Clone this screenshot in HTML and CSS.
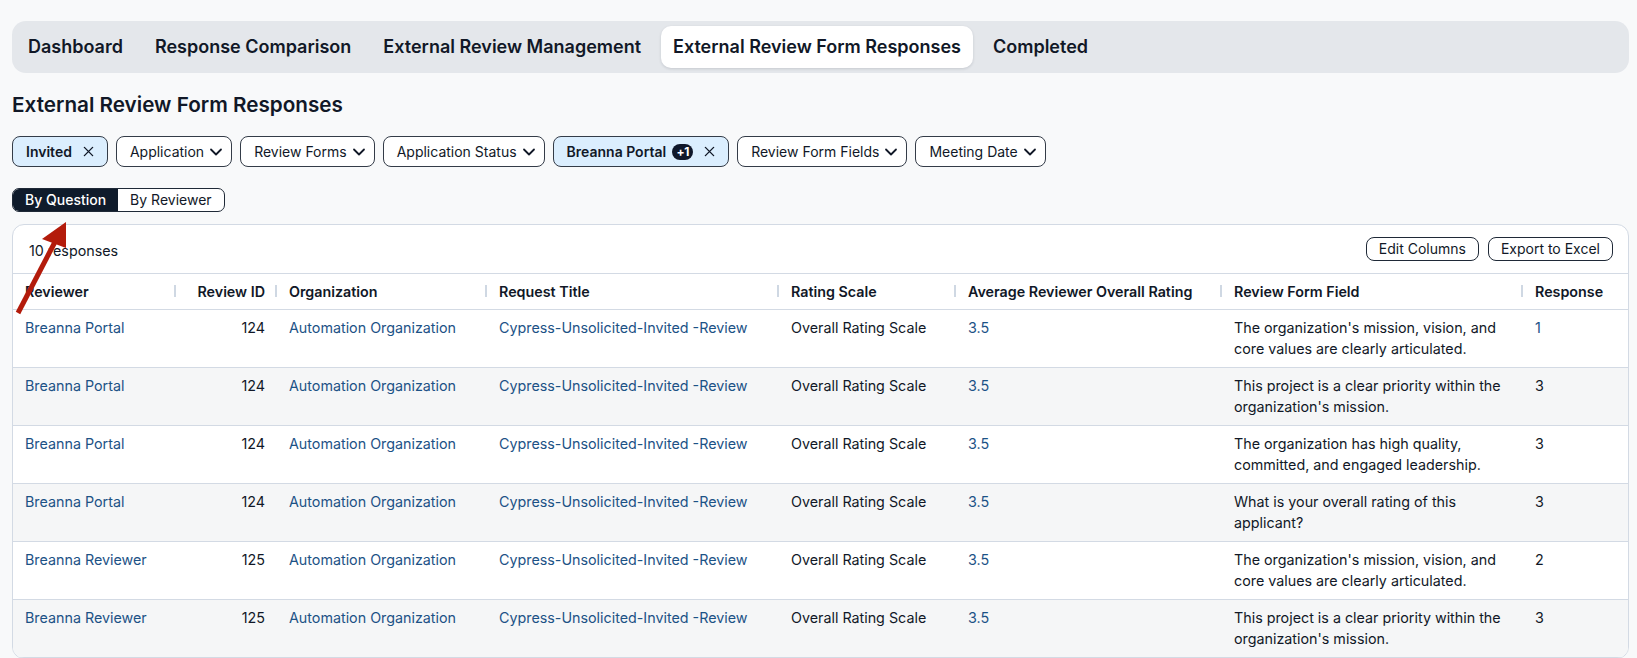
FILE: index.html
```html
<!DOCTYPE html>
<html lang="en">
<head>
<meta charset="utf-8">
<title>External Review Form Responses</title>
<link rel="stylesheet" href="styles.css">
</head>
<body>
<div class="page">
  <nav class="tabs">
    <div class="tab">Dashboard</div>
    <div class="tab">Response Comparison</div>
    <div class="tab">External Review Management</div>
    <div class="tab active">External Review Form Responses</div>
    <div class="tab">Completed</div>
  </nav>

  <h1 class="title">External Review Form Responses</h1>

  <div class="filters">
    <div class="chip chip-on"><span class="chip-label">Invited</span><svg class="x-icon" viewBox="0 0 12 12"><path d="M1.5 1.5L10.5 10.5M10.5 1.5L1.5 10.5"/></svg></div>
    <div class="chip"><span>Application</span><svg class="chev" viewBox="0 0 14 14"><path d="M2 4.5L7 9.5L12 4.5"/></svg></div>
    <div class="chip"><span>Review Forms</span><svg class="chev" viewBox="0 0 14 14"><path d="M2 4.5L7 9.5L12 4.5"/></svg></div>
    <div class="chip"><span>Application Status</span><svg class="chev" viewBox="0 0 14 14"><path d="M2 4.5L7 9.5L12 4.5"/></svg></div>
    <div class="chip chip-on"><span class="chip-label">Breanna Portal</span><span class="badge">+1</span><svg class="x-icon" viewBox="0 0 12 12"><path d="M1.5 1.5L10.5 10.5M10.5 1.5L1.5 10.5"/></svg></div>
    <div class="chip"><span>Review Form Fields</span><svg class="chev" viewBox="0 0 14 14"><path d="M2 4.5L7 9.5L12 4.5"/></svg></div>
    <div class="chip"><span>Meeting Date</span><svg class="chev" viewBox="0 0 14 14"><path d="M2 4.5L7 9.5L12 4.5"/></svg></div>
  </div>

  <div class="toggle">
    <div class="seg seg-on">By Question</div>
    <div class="seg">By Reviewer</div>
  </div>

  <section class="card">
    <div class="toolbar">
      <span class="count">10 responses</span>
      <div class="actions">
        <button class="btn">Edit Columns</button>
        <button class="btn">Export to Excel</button>
      </div>
    </div>
    <table class="grid">
      <colgroup>
        <col class="c1"><col class="c2"><col class="c3"><col class="c4"><col class="c5"><col class="c6"><col class="c7"><col class="c8">
      </colgroup>
      <thead>
        <tr>
          <th>Reviewer</th>
          <th class="num">Review ID</th>
          <th>Organization</th>
          <th>Request Title</th>
          <th>Rating Scale</th>
          <th>Average Reviewer Overall Rating</th>
          <th>Review Form Field</th>
          <th>Response</th>
        </tr>
      </thead>
      <tbody>
        <tr>
          <td class="link">Breanna Portal</td><td class="num">124</td><td class="link">Automation Organization</td><td class="link">Cypress-Unsolicited-Invited -Review</td><td>Overall Rating Scale</td><td class="link">3.5</td><td>The organization's mission, vision, and core values are clearly articulated.</td><td class="link">1</td>
        </tr>
        <tr>
          <td class="link">Breanna Portal</td><td class="num">124</td><td class="link">Automation Organization</td><td class="link">Cypress-Unsolicited-Invited -Review</td><td>Overall Rating Scale</td><td class="link">3.5</td><td>This project is a clear priority within the organization's mission.</td><td>3</td>
        </tr>
        <tr>
          <td class="link">Breanna Portal</td><td class="num">124</td><td class="link">Automation Organization</td><td class="link">Cypress-Unsolicited-Invited -Review</td><td>Overall Rating Scale</td><td class="link">3.5</td><td>The organization has high quality, committed, and engaged leadership.</td><td>3</td>
        </tr>
        <tr>
          <td class="link">Breanna Portal</td><td class="num">124</td><td class="link">Automation Organization</td><td class="link">Cypress-Unsolicited-Invited -Review</td><td>Overall Rating Scale</td><td class="link">3.5</td><td>What is your overall rating of this applicant?</td><td>3</td>
        </tr>
        <tr>
          <td class="link">Breanna Reviewer</td><td class="num">125</td><td class="link">Automation Organization</td><td class="link">Cypress-Unsolicited-Invited -Review</td><td>Overall Rating Scale</td><td class="link">3.5</td><td>The organization's mission, vision, and core values are clearly articulated.</td><td>2</td>
        </tr>
        <tr>
          <td class="link">Breanna Reviewer</td><td class="num">125</td><td class="link">Automation Organization</td><td class="link">Cypress-Unsolicited-Invited -Review</td><td>Overall Rating Scale</td><td class="link">3.5</td><td>This project is a clear priority within the organization's mission.</td><td>3</td>
        </tr>
      </tbody>
    </table>
  </section>

  <svg class="arrow" viewBox="0 0 100 150" width="100" height="150">
    <line x1="18" y1="133" x2="56" y2="60" />
    <polygon points="66,42 66,68 42,59" />
  </svg>
</div>
</body>
</html>
```

FILE: styles.css
```css
* { box-sizing: border-box; }

html, body {
  margin: 0;
  padding: 0;
  overflow: hidden;
}

body {
  background: #f8f9fa;
  color: #111827;
  font-family: Inter, "Noto Sans", "Liberation Sans", sans-serif;
  font-size: 14px;
}

.page {
  position: relative;
  padding: 21px 8px 0 12px;
}

/* Tabs */
.tabs {
  display: flex;
  gap: 8px;
  background: #e4e7eb;
  border-radius: 14px;
  padding: 5px 4px;
  height: 52px;
}

.tab {
  height: 42px;
  line-height: 42px;
  padding: 0 12px;
  font-size: 18px;
  font-weight: 600;
  color: #111827;
  border-radius: 10px;
  white-space: nowrap;
}

.tab.active {
  background: #ffffff;
  box-shadow: 0 1px 3px rgba(15, 23, 42, 0.14);
}

/* Title */
.title {
  margin: 18px 0 0;
  font-size: 20.7px;
  line-height: 28px;
  font-weight: 600;
  color: #111827;
}

/* Filters */
.filters {
  display: flex;
  gap: 8px;
  margin-top: 17px;
}

.chip {
  display: flex;
  align-items: center;
  height: 31px;
  padding: 0 8px 0 13px;
  border: 1px solid #343c48;
  border-radius: 8px;
  background: #ffffff;
  color: #111827;
  font-size: 14px;
  white-space: nowrap;
}

.chip-on {
  background: #dbeefe;
  padding-right: 13px;
}

.chip-label {
  font-weight: 600;
}

.chev {
  width: 14px;
  height: 14px;
  margin-left: 5px;
  fill: none;
  stroke: #111827;
  stroke-width: 1.8;
  stroke-linecap: round;
  stroke-linejoin: round;
}

.x-icon {
  width: 11px;
  height: 11px;
  margin-left: 11px;
  fill: none;
  stroke: #111827;
  stroke-width: 1.5;
  stroke-linecap: round;
}

.badge {
  display: inline-flex;
  align-items: center;
  justify-content: center;
  margin-left: 6px;
  height: 16px;
  min-width: 21px;
  padding: 0 4px;
  border-radius: 8px;
  background: #0f172a;
  color: #ffffff;
  font-size: 12px;
  font-weight: 700;
  letter-spacing: -0.5px;
}

.chip-on .badge + .x-icon {
  margin-left: 11px;
}

/* Toggle */
.toggle {
  display: inline-flex;
  margin-top: 21px;
  height: 24px;
  border: 1px solid #1f2937;
  border-radius: 7px;
  overflow: hidden;
  background: #ffffff;
}

.seg {
  padding: 0 12px;
  line-height: 22px;
  font-size: 14px;
  font-weight: 400;
  color: #111827;
  white-space: nowrap;
}

.seg-on {
  background: #0f1b2b;
  color: #ffffff;
  font-weight: 500;
}

/* Card */
.card {
  margin-top: 12px;
  background: #ffffff;
  border: 1px solid #d3dae4;
  border-radius: 12px;
  overflow: hidden;
}

.toolbar {
  display: flex;
  align-items: center;
  justify-content: space-between;
  height: 49px;
  padding: 0 15px 1px 16px;
  border-bottom: 1px solid #d3dae4;
}

.count {
  font-size: 14.3px;
  color: #111827;
  padding-top: 3px;
}

.actions {
  display: flex;
  gap: 9px;
}

.btn {
  height: 24px;
  padding: 0 12px;
  border: 1px solid #1f2937;
  border-radius: 8px;
  background: #ffffff;
  color: #111827;
  font-family: inherit;
  font-size: 14px;
  line-height: 22px;
}

/* Table */
.grid {
  width: 100%;
  border-collapse: collapse;
  table-layout: fixed;
}

.c1 { width: 163px; }
.c2 { width: 101px; }
.c3 { width: 210px; }
.c4 { width: 292px; }
.c5 { width: 177px; }
.c6 { width: 266px; }
.c7 { width: 301px; }
.c8 { width: auto; }

.grid th {
  position: relative;
  height: 35px;
  padding: 0 12px;
  text-align: left;
  font-size: 14.3px;
  font-weight: 600;
  color: #111827;
  border-bottom: 1px solid #d3dae4;
  white-space: nowrap;
}

.grid th:not(:last-child)::after {
  content: "";
  position: absolute;
  right: 0;
  top: 50%;
  width: 2px;
  height: 12px;
  margin-top: -6px;
  background: #cfd8e3;
}

.grid td {
  padding: 7px 12px 8px;
  vertical-align: top;
  font-size: 14.3px;
  line-height: 21px;
  color: #111827;
  border-bottom: 1px solid #d3dae4;
}

.grid tbody tr:nth-child(even) td {
  background: #f5f6f7;
}

.grid .num {
  text-align: right;
}

.grid td.link {
  color: #1c5286;
}

/* Annotation arrow */
.arrow {
  position: absolute;
  left: 0;
  top: 180px;
  pointer-events: none;
}

.arrow line {
  stroke: #b31b0b;
  stroke-width: 5;
}

.arrow polygon {
  fill: #b31b0b;
}
```
